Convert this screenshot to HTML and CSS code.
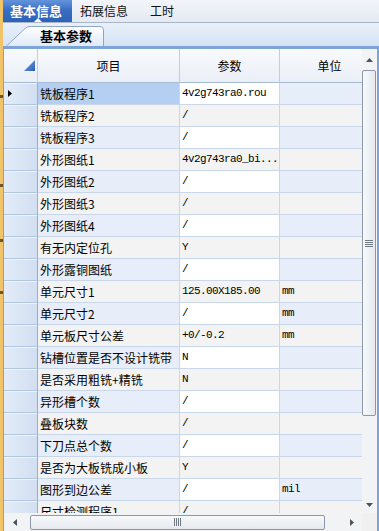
FILE: index.html
```html
<!DOCTYPE html>
<html>
<head>
<meta charset="utf-8">
<link rel="stylesheet" href="styles.css">
</head>
<body>
<div class="app">
  <div class="stripe"></div>
  <div class="window">
    <div class="tabs">
      <div class="tab active">基本信息</div>
      <div class="tab">拓展信息</div>
      <div class="tab">工时</div>
    </div>
    <div class="subtabs">
      <div class="subtab">
        <svg class="subtab-shape" width="98" height="20" viewBox="0 0 98 20">
          <defs>
            <linearGradient id="stg" x1="0" y1="0" x2="0" y2="1">
              <stop offset="0" stop-color="#ffffff"/>
              <stop offset="1" stop-color="#dfe9f7"/>
            </linearGradient>
          </defs>
          <path d="M0.5 20 L19 2.5 Q21 0.5 24 0.5 L94 0.5 Q97.5 0.5 97.5 4 L97.5 20" fill="url(#stg)" stroke="#8ea5c6" stroke-width="1"/>
        </svg>
        <span class="subtab-label">基本参数</span>
      </div>
    </div>
    <div class="panel">
      <div class="main">
        <div class="grid">
          <div class="row head">
            <div class="cell rh corner">
              <svg width="11" height="11" viewBox="0 0 11 11">
                <defs>
                  <linearGradient id="ctg" x1="0" y1="0" x2="1" y2="1">
                    <stop offset="0" stop-color="#7aa6ea"/>
                    <stop offset="1" stop-color="#2b5eb4"/>
                  </linearGradient>
                </defs>
                <polygon points="11,0 11,11 0,11" fill="url(#ctg)"/>
              </svg>
            </div>
            <div class="cell hc">项目</div>
            <div class="cell hc">参数</div>
            <div class="cell hc">单位</div>
          </div>
          <div class="row odd">
            <div class="cell rh"><svg class="cur" width="4" height="7" viewBox="0 0 4 7"><polygon points="0,0 4,3.5 0,7" fill="#000"/></svg></div>
            <div class="cell c1 sel">铣板程序1</div>
            <div class="cell c2">4v2g743ra0.rou</div>
            <div class="cell c3"></div>
          </div>
          <div class="row even">
            <div class="cell rh"></div><div class="cell c1">铣板程序2</div><div class="cell c2">/</div><div class="cell c3"></div>
          </div>
          <div class="row odd">
            <div class="cell rh"></div><div class="cell c1">铣板程序3</div><div class="cell c2">/</div><div class="cell c3"></div>
          </div>
          <div class="row even">
            <div class="cell rh"></div><div class="cell c1">外形图纸1</div><div class="cell c2">4v2g743ra0_bi...</div><div class="cell c3"></div>
          </div>
          <div class="row odd">
            <div class="cell rh"></div><div class="cell c1">外形图纸2</div><div class="cell c2">/</div><div class="cell c3"></div>
          </div>
          <div class="row even">
            <div class="cell rh"></div><div class="cell c1">外形图纸3</div><div class="cell c2">/</div><div class="cell c3"></div>
          </div>
          <div class="row odd">
            <div class="cell rh"></div><div class="cell c1">外形图纸4</div><div class="cell c2">/</div><div class="cell c3"></div>
          </div>
          <div class="row even">
            <div class="cell rh"></div><div class="cell c1">有无内定位孔</div><div class="cell c2">Y</div><div class="cell c3"></div>
          </div>
          <div class="row odd">
            <div class="cell rh"></div><div class="cell c1">外形露铜图纸</div><div class="cell c2">/</div><div class="cell c3"></div>
          </div>
          <div class="row even">
            <div class="cell rh"></div><div class="cell c1">单元尺寸1</div><div class="cell c2">125.00X185.00</div><div class="cell c3">mm</div>
          </div>
          <div class="row odd">
            <div class="cell rh"></div><div class="cell c1">单元尺寸2</div><div class="cell c2">/</div><div class="cell c3">mm</div>
          </div>
          <div class="row even">
            <div class="cell rh"></div><div class="cell c1">单元板尺寸公差</div><div class="cell c2">+0/-0.2</div><div class="cell c3">mm</div>
          </div>
          <div class="row odd">
            <div class="cell rh"></div><div class="cell c1">钻槽位置是否不设计铣带</div><div class="cell c2">N</div><div class="cell c3"></div>
          </div>
          <div class="row even">
            <div class="cell rh"></div><div class="cell c1">是否采用粗铣+精铣</div><div class="cell c2">N</div><div class="cell c3"></div>
          </div>
          <div class="row odd">
            <div class="cell rh"></div><div class="cell c1">异形槽个数</div><div class="cell c2">/</div><div class="cell c3"></div>
          </div>
          <div class="row even">
            <div class="cell rh"></div><div class="cell c1">叠板块数</div><div class="cell c2">/</div><div class="cell c3"></div>
          </div>
          <div class="row odd">
            <div class="cell rh"></div><div class="cell c1">下刀点总个数</div><div class="cell c2">/</div><div class="cell c3"></div>
          </div>
          <div class="row even">
            <div class="cell rh"></div><div class="cell c1">是否为大板铣成小板</div><div class="cell c2">Y</div><div class="cell c3"></div>
          </div>
          <div class="row odd">
            <div class="cell rh"></div><div class="cell c1">图形到边公差</div><div class="cell c2">/</div><div class="cell c3">mil</div>
          </div>
          <div class="row even">
            <div class="cell rh"></div><div class="cell c1">尺寸检测程序1</div><div class="cell c2">/</div><div class="cell c3"></div>
          </div>
        </div>
        <div class="vscroll">
          <div class="vbtn up"><svg width="7" height="4" viewBox="0 0 7 4"><polygon points="3.5,0 7,4 0,4" fill="#4a525c"/></svg></div>
          <div class="vthumb">
            <div class="grip-v"><i></i><i></i><i></i><i></i></div>
          </div>
          <div class="vspace"></div>
          <div class="vbtn down"><svg width="7" height="4" viewBox="0 0 7 4"><polygon points="0,0 7,0 3.5,4" fill="#4a525c"/></svg></div>
        </div>
      </div>
      <div class="bottom">
        <div class="hscroll">
          <div class="hbtn left"><svg width="4" height="7" viewBox="0 0 4 7"><polygon points="4,0 4,7 0,3.5" fill="#4a525c"/></svg></div>
          <div class="hthumb">
            <div class="grip-h"><i></i><i></i><i></i><i></i></div>
          </div>
          <div class="hbtn right"><svg width="4" height="7" viewBox="0 0 4 7"><polygon points="0,0 4,3.5 0,7" fill="#4a525c"/></svg></div>
        </div>
        <div class="corner-box"></div>
      </div>
    </div>
  </div>
</div>
</body>
</html>
```

FILE: styles.css
```css
* { box-sizing: border-box; }
html, body { margin: 0; padding: 0; }
body {
  width: 379px;
  height: 531px;
  overflow: hidden;
  background: #fff;
  font-family: "Noto Sans CJK SC", "Noto Sans", sans-serif;
  font-size: 12px;
  color: #000;
}
.app { display: flex; height: 531px; }
.stripe {
  width: 3px;
  flex: none;
  background: linear-gradient(to bottom,
    #f1c46a 0, #f1c46a 95px, #6b5630 95px, #6b5630 98px,
    #f1c46a 98px, #f1c46a 184px, #6b5630 184px, #6b5630 187px,
    #f1c46a 187px, #f1c46a 239px, #6b5630 239px, #6b5630 242px,
    #f1c46a 242px, #f1c46a 291px, #6b5630 291px, #6b5630 294px,
    #f1c46a 294px, #f1c46a 100%);
}
.window { flex: 1; min-width: 0; display: flex; flex-direction: column; }

/* top tabs */
.tabs {
  height: 23px;
  flex: none;
  display: flex;
  align-items: flex-start;
  border-bottom: 1px solid #a9b6c8;
  background: linear-gradient(#f2f5fa, #e4eaf2);
}
.tab {
  height: 22px;
  line-height: 21px;
  padding: 0 11px;
  font-size: 12px;
  color: #111;
}
.tab.active {
  position: relative;
  padding: 0 10px 0 7px;
  margin-right: -3px;
  font-size: 13px;
  font-weight: bold;
  color: #fff;
  background: linear-gradient(#6394dc, #3a6ec4 45%, #2d62b6);
}
.tab.active::after {
  content: "";
  position: absolute;
  left: 31px;
  bottom: 0;
  border-left: 4px solid transparent;
  border-right: 4px solid transparent;
  border-bottom: 4px solid #fff;
}

/* sub tabs */
.subtabs {
  height: 23px;
  flex: none;
  display: flex;
  align-items: flex-end;
  padding-left: 3px;
  background: linear-gradient(#e8effa, #d6e3f5);
}
.subtab { position: relative; width: 98px; height: 20px; }
.subtab-shape { position: absolute; left: 0; top: 0; }
.subtab-label {
  position: relative;
  display: block;
  padding-left: 34px;
  line-height: 19px;
  font-size: 13px;
  font-weight: bold;
  color: #000;
}

/* panel */
.panel {
  flex: 1;
  min-height: 0;
  display: flex;
  flex-direction: column;
  border-top: 3px solid #7ea3d6;
  border-left: 1px solid #8d9fb8;
  border-right: 2px solid #7ea3d6;
}
.main { flex: 1; min-height: 0; display: flex; }
.grid { flex: 1; min-width: 0; overflow: hidden; background: #fff; }
.row {
  display: grid;
  grid-template-columns: 34px 142px 100px 100px;
  height: 22px;
}
.cell {
  border-right: 1px solid #c9d7ea;
  border-bottom: 1px solid #c9d7ea;
  padding-left: 2px;
  line-height: 21px;
  white-space: nowrap;
  overflow: hidden;
}
.row.head { height: 34px; }
.row.head .cell {
  line-height: 33px;
  background: linear-gradient(#f8fafd, #eaeff6);
  border-right-color: #c2cddb;
  border-bottom-color: #a7bad3;
}
.hc { text-align: center; padding-left: 0; }
.corner {
  display: flex;
  justify-content: flex-end;
  align-items: flex-end;
  padding: 0 2px 1px 0;
}
.rh {
  background: linear-gradient(to right, #e3ecf8, #d2dff1);
  border-right-color: #97afd0;
  border-bottom-color: #b3c6e0;
  box-shadow: inset 0 1px 0 #eef4fc;
  display: flex;
  align-items: center;
  padding-left: 4px;
}
.row.head .rh { box-shadow: none; }
.odd .c1, .odd .c3 { background: #e7eef9; }
.odd .c2 { background: #fff; }
.even .c1, .even .c2, .even .c3 { background: #f3f3f3; }
.c1.sel { background: #b4cff1; }
.c2, .c3 {
  font-family: "Liberation Mono", "DejaVu Sans Mono", monospace;
  font-size: 11px;
  letter-spacing: -0.6px;
}

/* vertical scrollbar */
.vscroll {
  width: 15px;
  flex: none;
  display: flex;
  flex-direction: column;
  background: #f2f3f5;
}
.vbtn { display: flex; align-items: center; justify-content: center; flex: none; }
.vbtn.up { height: 21px; }
.vbtn.down { height: 17px; }
.vthumb {
  height: 346px;
  flex: none;
  border: 1px solid #8c98a8;
  border-radius: 2px;
  margin-right: 1px;
  background: linear-gradient(to right, #f7f9fb, #e5e9ee);
  display: flex;
  align-items: center;
  justify-content: center;
}
.vspace { flex: 1; }
.grip-v { display: flex; flex-direction: column; gap: 1px; }
.grip-v i { display: block; width: 8px; height: 1px; background: #6f7782; }

/* horizontal scrollbar */
.bottom { height: 18px; flex: none; display: flex; background: #f2f3f5; }
.hscroll { flex: 1; min-width: 0; display: flex; align-items: center; }
.hbtn { display: flex; align-items: center; height: 100%; flex: none; }
.hbtn.left { width: 26px; padding-left: 9px; }
.hbtn.right { flex: 1; justify-content: flex-end; padding-right: 8px; }
.hthumb {
  width: 295px;
  height: 15px;
  flex: none;
  border: 1px solid #8c98a8;
  border-radius: 2px;
  background: linear-gradient(#f7f9fb, #e5e9ee);
  display: flex;
  align-items: center;
  justify-content: center;
}
.grip-h { display: flex; gap: 1px; }
.grip-h i { display: block; width: 1px; height: 8px; background: #6f7782; }
.corner-box { width: 15px; flex: none; background: #f0f0f0; }
```
